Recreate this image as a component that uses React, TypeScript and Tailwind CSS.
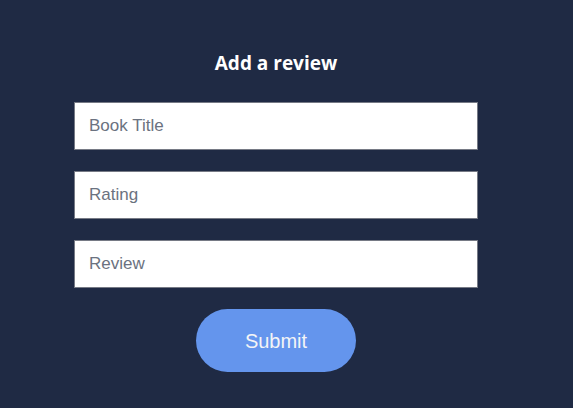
export default function App() {
  return (
    <div className="w-[573px] h-[408px] bg-[#1f2a44] overflow-hidden">
      <div className="w-[404px] ml-[74px] pt-[50px] flex flex-col items-center">
        <h2 className="text-[19px] font-bold text-white leading-[26px] font-['Open_Sans',sans-serif]">Add a review</h2>
        <div className="mt-[26px] w-full flex flex-col gap-[21px]">
          {['Book Title', 'Rating', 'Review'].map((p) => (
            <input
              key={p}
              placeholder={p}
              className="w-full h-[48px] bg-white border border-[#767a85] px-[14px] text-[17px] font-['Liberation_Sans',Arial,sans-serif] placeholder:text-[#6b7280] outline-none"
            />
          ))}
        </div>
        <button className="mt-[21px] w-[160px] h-[63px] rounded-full bg-[#6495ed] text-[#f3f4f6] text-[20px] font-['Liberation_Sans',Arial,sans-serif]">
          Submit
        </button>
      </div>
    </div>
  );
}
